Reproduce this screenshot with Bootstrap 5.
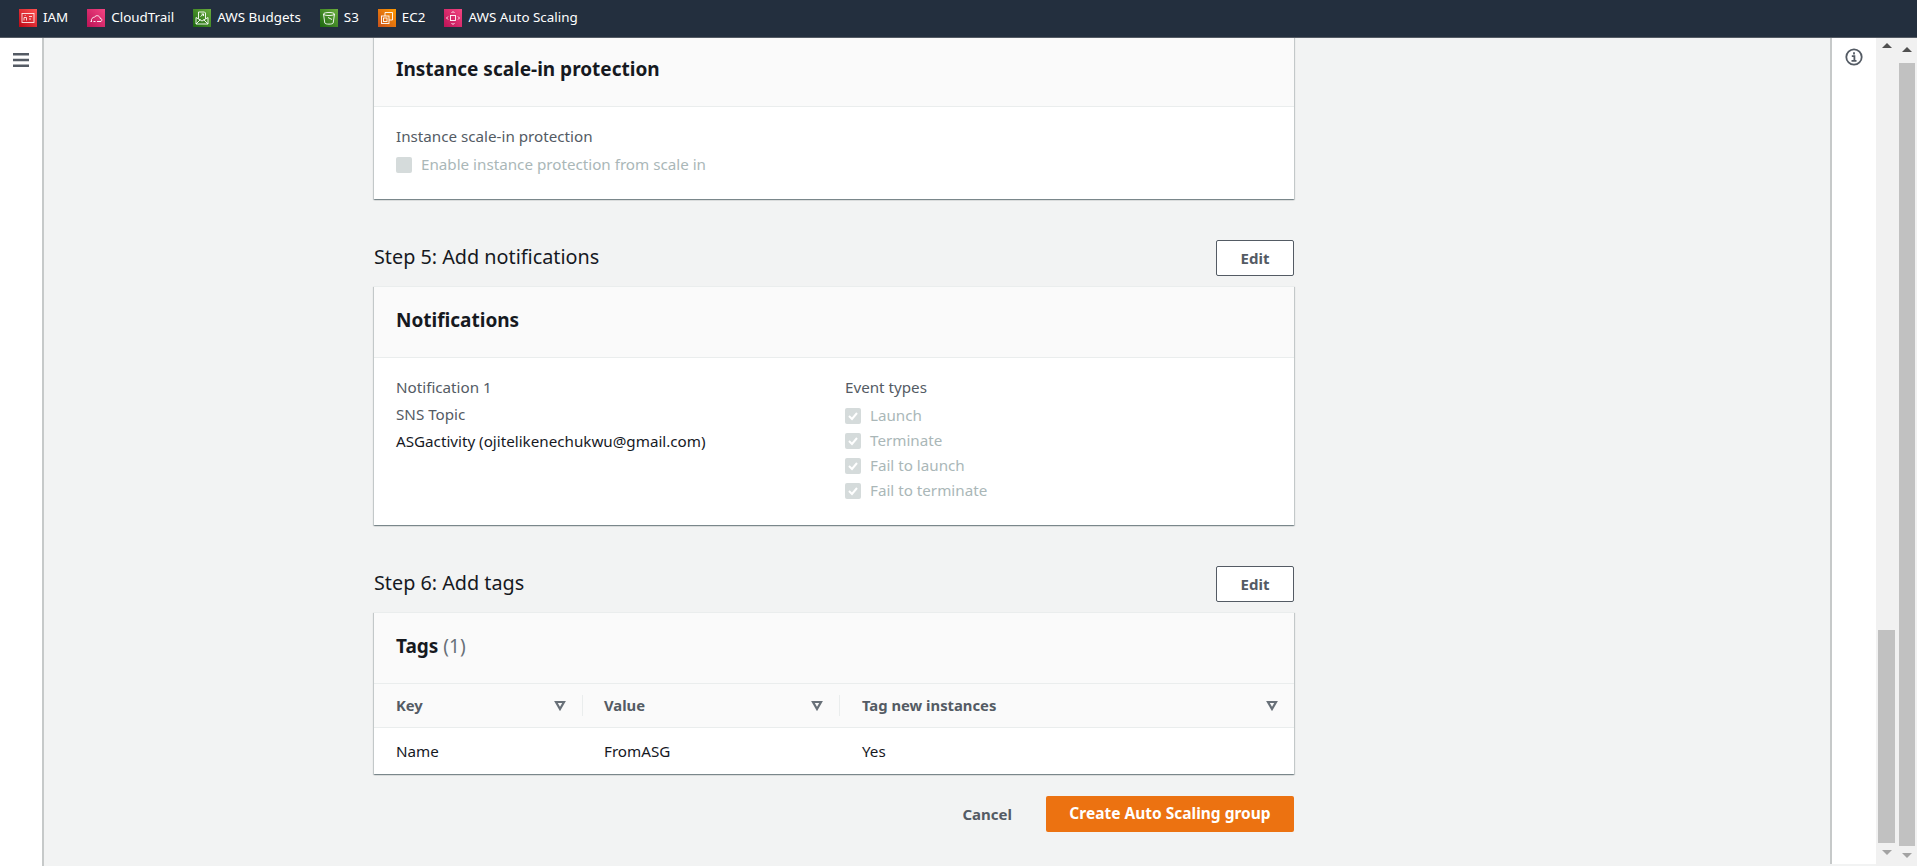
<!DOCTYPE html>
<html lang="en">
<head>
  <meta charset="UTF-8">
  <title>Create Auto Scaling group</title>
  <meta name="viewport" content="width=device-width, initial-scale=1">
  <link href="https://cdn.jsdelivr.net/npm/bootstrap@5.3.3/dist/css/bootstrap.min.css" rel="stylesheet">
  <style>
    html, body { height: 100%; overflow: hidden; }
    body { font-family: "Noto Sans", "Open Sans", sans-serif; font-size: 15.2px; color: #16191f; background: #f2f3f3; }
    .top-bar { height: 38px; background: #232f3e; color: #fff; padding: 0 0 2px 19px; gap: 19px; border-bottom: 1px solid #545b64; }
    .svc-link { gap: 6px; font-size: 13.4px; line-height: 1; }
    .svc-ico { width: 18px; height: 18px; flex: none; display: block; }
    .page-body { height: 828px; }
    .left-rail { width: 44px; flex: none; background: #fff; border-right: 2px solid #c6c9c9; padding: 15px 0 0 13px; }
    .burger { width: 16px; height: 14px; display: block; }
    .main-area { flex: 1 1 auto; min-width: 0; overflow: hidden; }
    .content-col { width: 920px; margin: -3px 0 0 330px; }
    .aws-panel { background: #fff; box-shadow: 0 1px 1px 0 rgba(0,28,36,.3), 1px 1px 1px 0 rgba(0,28,36,.15), -1px 1px 1px 0 rgba(0,28,36,.15); }
    .panel-head { background: #fafafa; border-top: 1px solid #eaeded; border-bottom: 1px solid #eaeded; height: 72px; padding: 0 22px 3px; }
    .panel-head h2 { font-size: 19px; font-weight: 700; margin: 0; line-height: 1; }
    .panel-count { font-weight: 400; color: #687078; }
    .panel-body-a { height: 92px; padding: 19px 22px 0; }
    .panel-body-b { height: 167px; padding: 19px 22px 0; }
    .col-notes { width: 449px; flex: none; }
    .field-label { color: #545b64; line-height: 20px; margin-bottom: 6px; }
    .note-line { line-height: 20px; margin-bottom: 7px; color: #545b64; }
    .note-line.strong-line { color: #16191f; }
    .check-row { gap: 9px; color: #aab7b8; line-height: 20px; height: 25px; }
    .check-row span:last-child { padding-bottom: 2px; }
    .fake-check { width: 16px; height: 16px; background: #d5dbdb; border-radius: 2px; flex: none; display: block; }
    .step-row { height: 36px; margin: 41px 0 10px; }
    .step-row h3 { font-size: 19.8px; font-weight: 400; margin: 0; padding-bottom: 3px; color: #16191f; }
    .edit-btn { width: 78px; height: 36px; padding: 0; background: #fff; border: 1px solid #545b64; border-radius: 2px; color: #545b64; font-size: 15px; font-weight: 700; }
    .tag-grid { background: #fafafa; border-bottom: 1px solid #eaeded; height: 44px; color: #545b64; font-weight: 700; font-size: 14.8px; }
    .tag-cell { padding: 0 16px 0 22px; position: relative; }
    .tag-head-cell + .tag-head-cell::before { content: ""; position: absolute; left: 0; top: 11px; height: 21px; width: 1px; background: #eaeded; }
    .tag-col-a { width: 208px; flex: none; }
    .tag-col-b { width: 257px; flex: none; }
    .tag-col-c { flex: 1 1 auto; padding-left: 23px; }
    .sort-caret { width: 12px; height: 11px; display: block; flex: none; }
    .tag-body { height: 46px; color: #16191f; }
    .form-actions { gap: 34px; margin-top: 22px; }
    .cancel-btn { color: #545b64; font-weight: 700; font-size: 15px; background: none; border: 0; padding: 0; }
    .create-btn { width: 248px; height: 36px; padding: 0; border: 0; border-radius: 2px; background: #ec7211; color: #fff; font-size: 15.5px; font-weight: 700; }
    .right-rail { width: 46px; flex: none; background: #fff; border-left: 2px solid #c6c9c9; padding: 10px 0 0 13px; height: 826px; }
    .info-ico { width: 18px; height: 18px; display: block; }
    .scroll-track { flex: none; background: #f1f1f1; position: relative; }
    .scroll-a { width: 21px; }
    .scroll-b { width: 20px; }
    .scroll-thumb { position: absolute; background: #c1c1c1; }
    .scroll-a .scroll-thumb { left: 2px; width: 17px; top: 592px; height: 213px; }
    .scroll-b .scroll-thumb { left: 2px; width: 16px; top: 25px; height: 783px; }
    .sb-arrow { position: absolute; left: 50%; margin-left: -5px; width: 0; height: 0; border-left: 5px solid transparent; border-right: 5px solid transparent; }
    .sb-up { border-bottom: 5px solid #505050; }
    .sb-down { border-top: 5px solid #a3a3a3; }
    .scroll-a .sb-up { top: 5px; }
    .scroll-b .sb-up { top: 9px; }
    .scroll-a .sb-down { top: 812px; }
    .scroll-b .sb-down { top: 815px; }
  </style>
</head>
<body>
  <!-- service shortcuts -->
  <svg width="0" height="0" class="position-absolute">
    <defs>
      <linearGradient id="g-red" x1="0" y1="1" x2="1" y2="0"><stop offset="0" stop-color="#bd0816"/><stop offset="1" stop-color="#ff5252"/></linearGradient>
      <linearGradient id="g-pink" x1="0" y1="1" x2="1" y2="0"><stop offset="0" stop-color="#bc1356"/><stop offset="1" stop-color="#f34482"/></linearGradient>
      <linearGradient id="g-green" x1="0" y1="1" x2="1" y2="0"><stop offset="0" stop-color="#1b660f"/><stop offset="1" stop-color="#6cae3e"/></linearGradient>
      <linearGradient id="g-orange" x1="0" y1="1" x2="1" y2="0"><stop offset="0" stop-color="#c8511b"/><stop offset="1" stop-color="#ff9900"/></linearGradient>
    </defs>
  </svg>
  <div class="top-bar d-flex align-items-center">
    <div class="svc-link d-flex align-items-center">
      <svg class="svc-ico" viewBox="0 0 18 18"><rect width="18" height="18" fill="url(#g-red)"/><g fill="none" stroke="#fff" stroke-width=".9" opacity=".9"><rect x="3" y="4.500" width="12" height="9"/><path d="M5 11.500V8.500h2.500v3M10 7.500h3M10 10h2M6.200 7v-.8"/></g></svg>
      <span>IAM</span>
    </div>
    <div class="svc-link d-flex align-items-center">
      <svg class="svc-ico" viewBox="0 0 18 18"><rect width="18" height="18" fill="url(#g-pink)"/><path d="M3.500 12.500h1.500M6.500 12.500h2M10 12.500h4c1.500-1.200.8-3.300-1-3.300-.3-2.700-4-3.600-5.400-1-1.900-.2-3.800 2-3.100 3.800" fill="none" stroke="#fff" stroke-width=".9"/></svg>
      <span>CloudTrail</span>
    </div>
    <div class="svc-link d-flex align-items-center">
      <svg class="svc-ico" viewBox="0 0 18 18"><rect width="18" height="18" fill="url(#g-green)"/><path d="M3 8.500V15h12V8.500L9 12zM3 15l4.500-4.500M15 15l-4.500-4.500M5.500 9.800V3h6l1 1v5.800M7.500 7.500l3-2.500M8.500 5h2v2" fill="none" stroke="#fff" stroke-width=".9"/></svg>
      <span>AWS Budgets</span>
    </div>
    <div class="svc-link d-flex align-items-center">
      <svg class="svc-ico" viewBox="0 0 18 18"><rect width="18" height="18" fill="url(#g-green)"/><path d="M3.500 5c0-2 11-2 11 0s-11 2-11 0l1.300 9c.3 1.500 8.100 1.500 8.400 0l1.300-9M8 8.500l4 2" fill="none" stroke="#fff" stroke-width=".9"/></svg>
      <span>S3</span>
    </div>
    <div class="svc-link d-flex align-items-center">
      <svg class="svc-ico" viewBox="0 0 18 18"><rect width="18" height="18" fill="url(#g-orange)"/><g fill="none" stroke="#fff" stroke-width=".9"><path d="M7 7V3.500h7.500V11H11"/><rect x="3.500" y="7" width="7.500" height="7.500"/><rect x="5.500" y="9" width="3.500" height="3.500"/></g></svg>
      <span>EC2</span>
    </div>
    <div class="svc-link d-flex align-items-center">
      <svg class="svc-ico" viewBox="0 0 18 18"><rect width="18" height="18" fill="url(#g-pink)"/><g fill="none" stroke="#fff" stroke-width=".9"><rect x="6.500" y="6.500" width="5" height="5"/><path d="M7.500 4l1.500-1.500L10.500 4M7.500 14l1.500 1.500 1.500-1.500M4 7.500L2.500 9 4 10.500M14 7.500L15.500 9 14 10.500"/></g></svg>
      <span>AWS Auto Scaling</span>
    </div>
  </div>

  <div class="page-body d-flex">
    <div class="left-rail">
      <svg class="burger" viewBox="0 0 16 14"><path d="M0 1.300h16M0 7h16M0 12.700h16" stroke="#545b64" stroke-width="2.400"/></svg>
    </div>

    <div class="main-area">
      <div class="content-col">
        <div class="aws-panel">
          <div class="panel-head d-flex align-items-center"><h2>Instance scale-in protection</h2></div>
          <div class="panel-body-a">
            <div class="field-label">Instance scale-in protection</div>
            <div class="check-row d-flex align-items-center">
              <span class="fake-check"></span><span>Enable instance protection from scale in</span>
            </div>
          </div>
        </div>

        <div class="step-row d-flex justify-content-between align-items-center">
          <h3>Step 5: Add notifications</h3>
          <button class="edit-btn">Edit</button>
        </div>
        <div class="aws-panel">
          <div class="panel-head d-flex align-items-center"><h2>Notifications</h2></div>
          <div class="panel-body-b d-flex">
            <div class="col-notes">
              <div class="note-line">Notification 1</div>
              <div class="note-line">SNS Topic</div>
              <div class="note-line strong-line">ASGactivity (ojitelikenechukwu@gmail.com)</div>
            </div>
            <div class="flex-grow-1">
              <div class="field-label">Event types</div>
              <div class="check-row d-flex align-items-center">
                <svg class="fake-check" viewBox="0 0 16 16"><path d="M4 8l3 3 5-6" fill="none" stroke="#fff" stroke-width="2"/></svg><span>Launch</span>
              </div>
              <div class="check-row d-flex align-items-center">
                <svg class="fake-check" viewBox="0 0 16 16"><path d="M4 8l3 3 5-6" fill="none" stroke="#fff" stroke-width="2"/></svg><span>Terminate</span>
              </div>
              <div class="check-row d-flex align-items-center">
                <svg class="fake-check" viewBox="0 0 16 16"><path d="M4 8l3 3 5-6" fill="none" stroke="#fff" stroke-width="2"/></svg><span>Fail to launch</span>
              </div>
              <div class="check-row d-flex align-items-center">
                <svg class="fake-check" viewBox="0 0 16 16"><path d="M4 8l3 3 5-6" fill="none" stroke="#fff" stroke-width="2"/></svg><span>Fail to terminate</span>
              </div>
            </div>
          </div>
        </div>

        <div class="step-row d-flex justify-content-between align-items-center">
          <h3>Step 6: Add tags</h3>
          <button class="edit-btn">Edit</button>
        </div>
        <div class="aws-panel">
          <div class="panel-head d-flex align-items-center"><h2>Tags <span class="panel-count">(1)</span></h2></div>
          <div class="tag-grid d-flex">
            <div class="tag-cell tag-head-cell tag-col-a d-flex align-items-center justify-content-between"><span>Key</span><svg class="sort-caret" viewBox="0 0 12 11"><path d="M2 2h8L6 9z" fill="none" stroke="#687078" stroke-width="2.200"/></svg></div>
            <div class="tag-cell tag-head-cell tag-col-b d-flex align-items-center justify-content-between"><span>Value</span><svg class="sort-caret" viewBox="0 0 12 11"><path d="M2 2h8L6 9z" fill="none" stroke="#687078" stroke-width="2.200"/></svg></div>
            <div class="tag-cell tag-head-cell tag-col-c d-flex align-items-center justify-content-between"><span>Tag new instances</span><svg class="sort-caret" viewBox="0 0 12 11"><path d="M2 2h8L6 9z" fill="none" stroke="#687078" stroke-width="2.200"/></svg></div>
          </div>
          <div class="tag-body d-flex align-items-center">
            <div class="tag-cell tag-col-a">Name</div>
            <div class="tag-cell tag-col-b">FromASG</div>
            <div class="tag-cell tag-col-c">Yes</div>
          </div>
        </div>

        <div class="form-actions d-flex justify-content-end align-items-center">
          <button class="cancel-btn">Cancel</button>
          <button class="create-btn">Create Auto Scaling group</button>
        </div>
      </div>
    </div>

    <div class="right-rail">
      <svg class="info-ico" viewBox="0 0 18 18"><circle cx="9" cy="9" r="7.700" fill="none" stroke="#545b64" stroke-width="1.800"/><path d="M9 4.300v2.200M6.800 8.200h2.600v4.300M6.500 12.800h5" fill="none" stroke="#545b64" stroke-width="1.800"/></svg>
    </div>
    <div class="scroll-track scroll-a">
      <span class="sb-arrow sb-up"></span>
      <div class="scroll-thumb"></div>
      <span class="sb-arrow sb-down"></span>
    </div>
    <div class="scroll-track scroll-b">
      <span class="sb-arrow sb-up"></span>
      <div class="scroll-thumb"></div>
      <span class="sb-arrow sb-down"></span>
    </div>
  </div>
</body>
</html>
